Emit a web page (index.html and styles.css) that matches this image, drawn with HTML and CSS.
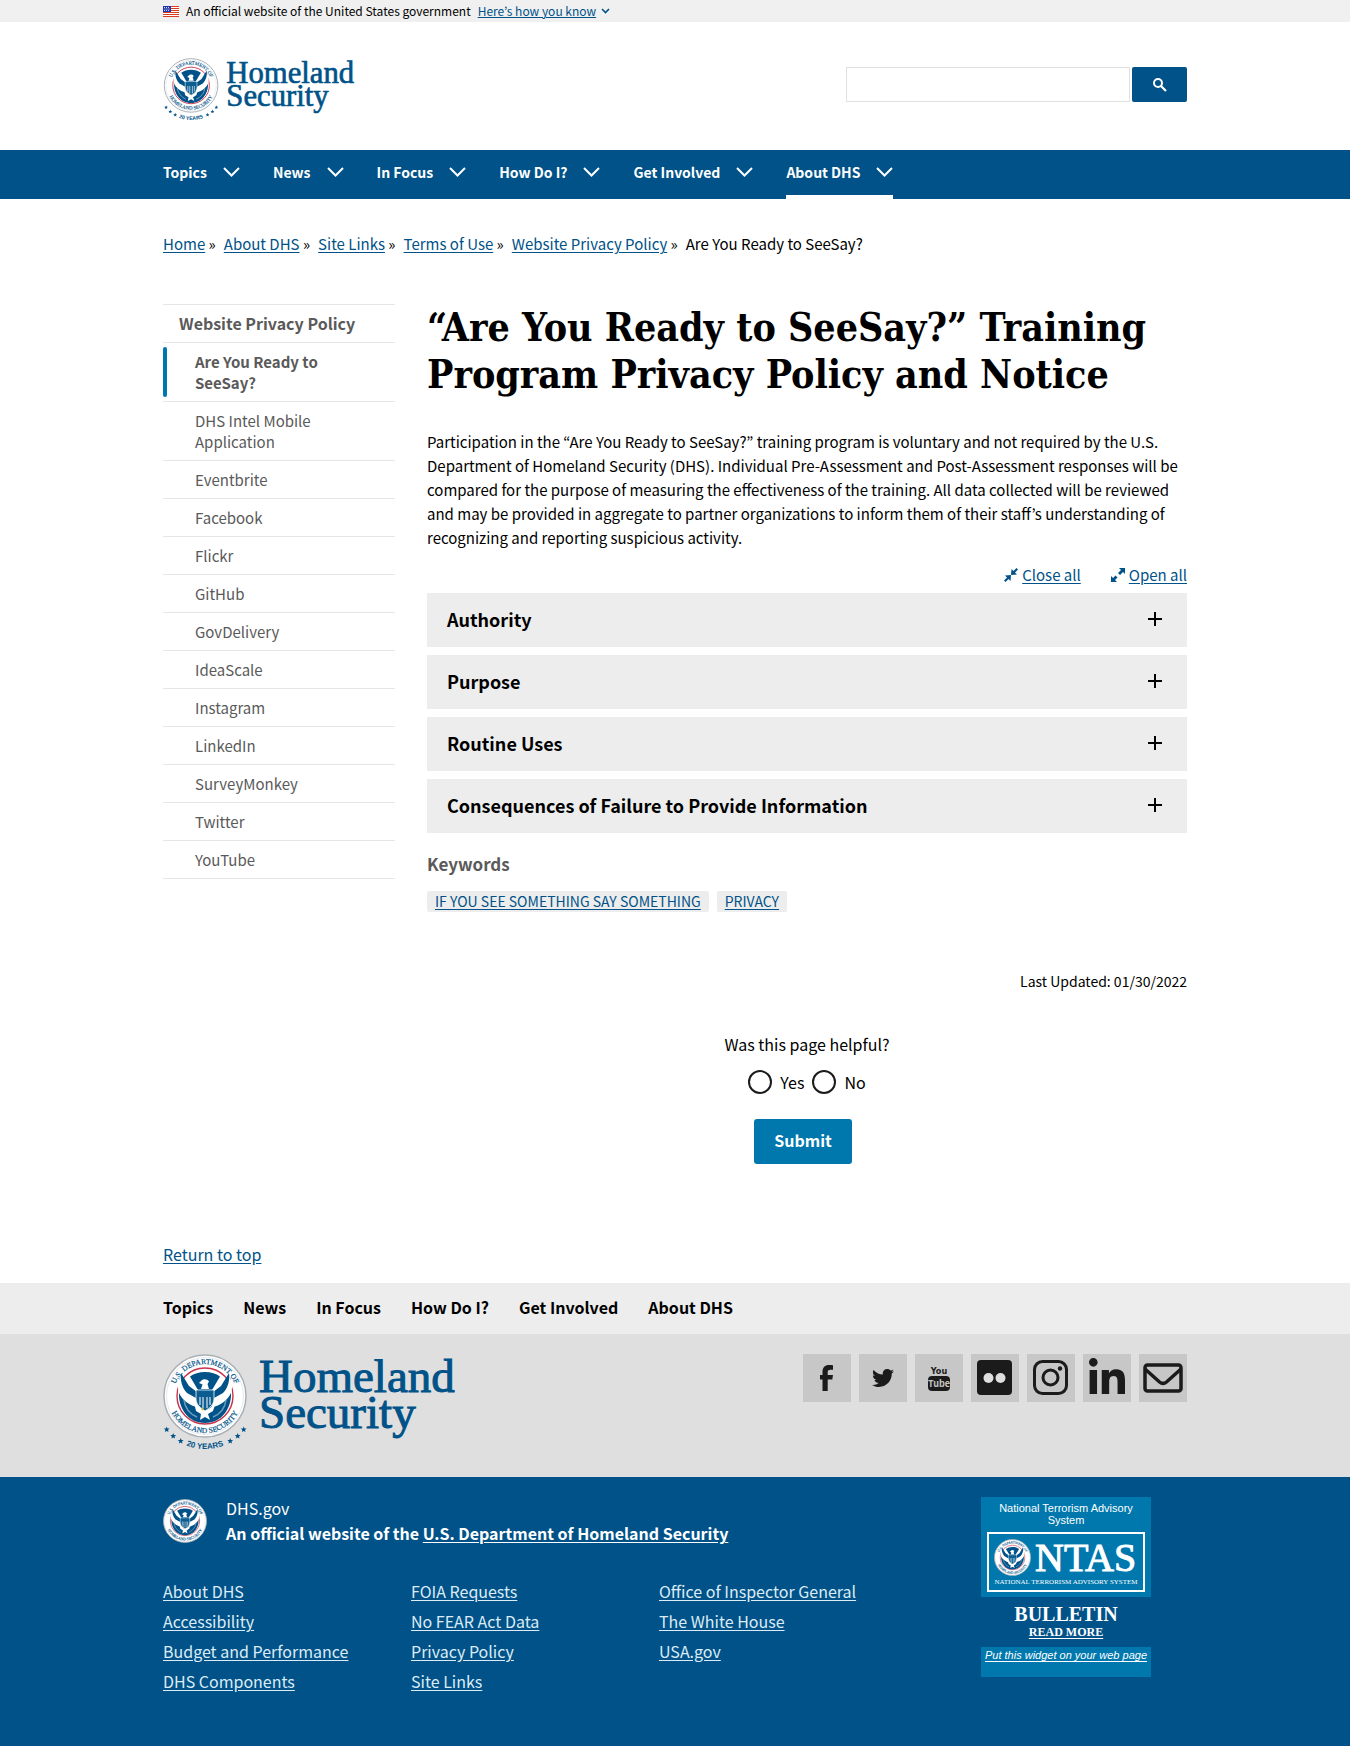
FILE: index.html
```html
<!DOCTYPE html>
<html lang="en">
<head>
<meta charset="utf-8">
<meta name="viewport" content="width=device-width, initial-scale=1">
<title>“Are You Ready to SeeSay?” Training Program Privacy Policy and Notice | Homeland Security</title>
<link rel="stylesheet" href="styles.css">
</head>
<body id="top">
<svg class="sprite" width="0" height="0" aria-hidden="true">
  <defs>
    <path id="ring-top" d="M11 50A32 32 0 1 1 73 50"/>
    <path id="ring-bottom" d="M5 42A37 37 0 0 0 79 42"/>
    <path id="ring-years" d="M-11 42A53 53 0 0 0 95 42"/>
  </defs>
  <symbol id="seal" viewBox="0 0 84 84" overflow="visible">
    <circle cx="42" cy="42" r="41" fill="#fff" stroke="#a9b0b5" stroke-width="1.5"/>
    <circle cx="42" cy="42" r="38.5" fill="none" stroke="#d5d9dc" stroke-width=".6"/>
    <circle cx="42" cy="42" r="28" fill="#fff" stroke="#c8324a" stroke-width="1.4"/>
    <g fill="#005288" font-family="Liberation Serif, serif" font-size="7.5" stroke="#005288" stroke-width=".2">
      <text text-anchor="middle"><textPath href="#ring-top" startOffset="50%">U.S. DEPARTMENT OF</textPath></text>
      <text text-anchor="middle"><textPath href="#ring-bottom" startOffset="50%">HOMELAND SECURITY</textPath></text>
    </g>
    <path fill="#005288" d="M42 18c-6 0-11 1.600-15 4.500L35 36l-3 6-9-4-6-15c-2 8-1 11 2 16l-3-1c-1 16 9 31 26 31s27-15 26-31l-3 1c3-5 4-8 2-16l-6 15-9 4-3-6 8-13.500C53 19.600 48 18 42 18z"/>
    <path fill="#fff" d="M18 22l6 13 10 7 1 11c-8-1-16-7-19-14-2-6-1-12 2-17zM66 22l-6 13-10 7-1 11c8-1 16-7 19-14 2-6 1-12-2-17z"/>
    <path fill="#005288" d="M18 19l8 13 8 6-1 6-9-5c-5-5-7-13-6-20zM66 19l-8 13-8 6 1 6 9-5c5-5 7-13 6-20z"/>
    <path fill="#fff" d="M38 27c2-2.500 6-2.500 8 .5l-1.500 2.500 1.500 5h-8l1.500-4.500L36 29z"/>
    <path fill="#0b5d92" stroke="#fff" stroke-width=".8" d="M33 36h18v9c0 6-5 9-9 12-4-3-9-6-9-12z"/>
    <path stroke="#fff" stroke-width="1" d="M37 43v8M40 43v11M44 43v11M47 43v8"/>
    <path fill="#fff" d="M31 48l7 6 4 3 5-3 6-6-3 9-5 3 2 6-5-3-5 3 1-6-5-3z"/>
    <path fill="none" stroke="#6f9fc0" stroke-width="1.500" d="M21 46c1 8 6 14 13 17M63 46c-1 8-6 14-13 17"/>
    <circle cx="39.500" cy="55" r="1.200" fill="#c9b84a"/>
  </symbol>
  <symbol id="logo" viewBox="0 0 292 98" overflow="visible">
    <use href="#seal" width="84" height="84"/>
    <g fill="#005288">
      <path id="star" d="M3.700 72.500l.8 2 2.100.1-1.600 1.400.5 2.100-1.800-1.200-1.800 1.200.5-2.100-1.600-1.400 2.100-.1z"/>
      <use href="#star" x="6.500" y="6.500"/><use href="#star" x="14" y="11.500"/>
      <use href="#star" x="77" y="0"/><use href="#star" x="71" y="6.500"/><use href="#star" x="63.500" y="11.500"/>
      <text font-family="Liberation Sans, sans-serif" font-size="8" font-weight="bold" text-anchor="middle"><textPath href="#ring-years" startOffset="50%">20 YEARS</textPath></text>
      <g font-family="Liberation Serif, serif" font-size="47" stroke="#005288" stroke-width="1">
        <text x="96" y="38">Homeland</text>
        <text x="96" y="74">Security</text>
      </g>
    </g>
  </symbol>
  <symbol id="chevron" viewBox="0 0 17 10"><path fill="none" stroke="currentColor" stroke-width="2" d="M1 1l7.500 7.500L16 1"/></symbol>
  <symbol id="plus" viewBox="0 0 14 14"><path fill="currentColor" d="M6 0h2v6h6v2H8v6H6V8H0V6h6z"/></symbol>
</svg>

<div class="banner">
  <div class="container banner-row">
    <svg class="flag" viewBox="0 0 16 11" aria-hidden="true">
      <path fill="#fff" d="M0 0h16v11H0z"/>
      <path stroke="#db3e1f" d="M0 .5h16M0 2.500h16M0 4.500h16M0 6.500h16M0 8.500h16M0 10.500h16"/>
      <path fill="#1e33b1" d="M0 0h8v6H0z"/>
      <path stroke="#fff" stroke-width=".8" stroke-dasharray="1 1" d="M1 1.500h6M1.500 3h6M1 4.500h6"/>
    </svg>
    <span>An official website of the United States government</span>
    <button class="banner-button" type="button"><span>Here’s how you know</span>
      <svg width="9" height="6" viewBox="0 0 9 6" aria-hidden="true"><path fill="none" stroke="#005288" stroke-width="1.600" d="M1 1l3.500 3.500L8 1"/></svg></button>
  </div>
</div>

<header class="container header">
  <a class="logo" href="#top" aria-label="Homeland Security"><svg viewBox="0 0 292 98" aria-hidden="true"><use href="#logo"/></svg></a>
  <form class="search" role="search">
    <input type="search" aria-label="Search">
    <button type="submit" aria-label="Search"><svg width="14" height="14" viewBox="0 0 14 14" aria-hidden="true"><circle cx="5" cy="5" r="4" fill="none" stroke="#fff" stroke-width="2"/><path stroke="#fff" stroke-width="2.200" d="M8 8l5 5"/></svg></button>
  </form>
</header>

<nav class="nav" aria-label="Primary">
  <ul class="container nav-list">
    <li><button type="button">Topics <svg aria-hidden="true"><use href="#chevron"/></svg></button></li>
    <li><button type="button">News <svg aria-hidden="true"><use href="#chevron"/></svg></button></li>
    <li><button type="button">In Focus <svg aria-hidden="true"><use href="#chevron"/></svg></button></li>
    <li><button type="button">How Do I? <svg aria-hidden="true"><use href="#chevron"/></svg></button></li>
    <li><button type="button">Get Involved <svg aria-hidden="true"><use href="#chevron"/></svg></button></li>
    <li><button type="button" class="current">About DHS <svg aria-hidden="true"><use href="#chevron"/></svg></button></li>
  </ul>
</nav>

<div class="container">
  <nav aria-label="Breadcrumb">
    <ol class="breadcrumb">
      <li><a href="#">Home</a> »</li>
      <li><a href="#">About DHS</a> »</li>
      <li><a href="#">Site Links</a> »</li>
      <li><a href="#">Terms of Use</a> »</li>
      <li><a href="#">Website Privacy Policy</a> »</li>
      <li>Are You Ready to SeeSay?</li>
    </ol>
  </nav>

  <div class="columns">
    <nav class="sidenav" aria-label="Section">
      <ul>
        <li class="parent"><a href="#">Website Privacy Policy</a></li>
        <li class="active"><a href="#" aria-current="page">Are You Ready to SeeSay?</a></li>
        <li><a href="#">DHS Intel Mobile Application</a></li>
        <li><a href="#">Eventbrite</a></li>
        <li><a href="#">Facebook</a></li>
        <li><a href="#">Flickr</a></li>
        <li><a href="#">GitHub</a></li>
        <li><a href="#">GovDelivery</a></li>
        <li><a href="#">IdeaScale</a></li>
        <li><a href="#">Instagram</a></li>
        <li><a href="#">LinkedIn</a></li>
        <li><a href="#">SurveyMonkey</a></li>
        <li><a href="#">Twitter</a></li>
        <li><a href="#">YouTube</a></li>
      </ul>
    </nav>

    <main class="main">
      <h1>“Are You Ready to SeeSay?” Training Program Privacy Policy and Notice</h1>
      <p class="intro">Participation in the “Are You Ready to SeeSay?” training program is voluntary and not required by the U.S. Department of Homeland Security (DHS). Individual Pre-Assessment and Post-Assessment responses will be compared for the purpose of measuring the effectiveness of the training. All data collected will be reviewed and may be provided in aggregate to partner organizations to inform them of their staff’s understanding of recognizing and reporting suspicious activity.</p>
      <div class="toggles">
        <a href="#"><svg viewBox="0 0 14 14" aria-hidden="true"><path fill="#005288" d="M12.500 0L14 1.500l-3 3 2 2-6 .6L7.500 1l2 2zM1.500 14L0 12.500l3-3-2-2 6-.6L6.500 13l-2-2z"/></svg><span>Close all</span></a>
        <a href="#"><svg viewBox="0 0 14 14" aria-hidden="true"><path fill="#005288" d="M8 0h6v6l-2-2-3 3-2-2 3-3zM0 14V8l2 2 2.500-2.500 2 2L4 12l2 2z"/></svg><span>Open all</span></a>
      </div>
      <div class="accordion">
        <h2><button type="button" aria-expanded="false">Authority <svg aria-hidden="true"><use href="#plus"/></svg></button></h2>
        <h2><button type="button" aria-expanded="false">Purpose <svg aria-hidden="true"><use href="#plus"/></svg></button></h2>
        <h2><button type="button" aria-expanded="false">Routine Uses <svg aria-hidden="true"><use href="#plus"/></svg></button></h2>
        <h2><button type="button" aria-expanded="false">Consequences of Failure to Provide Information <svg aria-hidden="true"><use href="#plus"/></svg></button></h2>
      </div>
      <h3 class="keywords-title">Keywords</h3>
      <ul class="tags">
        <li><a href="#">IF YOU SEE SOMETHING SAY SOMETHING</a></li>
        <li><a href="#">PRIVACY</a></li>
      </ul>
      <p class="updated">Last Updated: 01/30/2022</p>
      <form class="feedback">
        <fieldset>
          <legend>Was this page helpful?</legend>
          <div class="choices">
            <input type="radio" name="helpful" id="yes"><label for="yes">Yes</label>
            <input type="radio" name="helpful" id="no"><label for="no">No</label>
          </div>
        </fieldset>
        <button type="submit">Submit</button>
      </form>
    </main>
  </div>
  <p class="return"><a href="#top">Return to top</a></p>
</div>

<footer>
  <nav class="footer-nav" aria-label="Footer">
    <ul class="container">
      <li><a href="#">Topics</a></li>
      <li><a href="#">News</a></li>
      <li><a href="#">In Focus</a></li>
      <li><a href="#">How Do I?</a></li>
      <li><a href="#">Get Involved</a></li>
      <li><a href="#">About DHS</a></li>
    </ul>
  </nav>
  <div class="footer-brand">
    <div class="container footer-brand-row">
      <a class="footer-logo" href="#top" aria-label="Homeland Security"><svg viewBox="0 0 292 98" aria-hidden="true"><use href="#logo"/></svg></a>
      <ul class="social">
        <li><a href="#" aria-label="Facebook"><svg viewBox="0 0 48 48"><path d="M30 11.200v4.600h-2.600c-2.200 0-2.700 1-2.700 2.400V21H30l-.7 4.600h-4.600V37h-5.200V25.600H17V21h2.500v-3.200c0-4.300 2.500-6.800 6.400-6.800 2 0 3.400.1 4.100.2z"/></svg></a></li>
        <li><a href="#" aria-label="Twitter"><svg viewBox="0 0 48 48"><svg x="13" y="13" width="22" height="22" viewBox="0 0 512 512"><path d="M459.370 151.716c.325 4.548.325 9.097.325 13.645 0 138.720-105.583 298.558-298.558 298.558-59.452 0-114.680-17.219-161.137-47.106 8.447.974 16.568 1.299 25.340 1.299 49.055 0 94.213-16.568 130.274-44.832-46.132-.975-84.792-31.188-98.112-72.772 6.498.974 12.995 1.624 19.818 1.624 9.421 0 18.843-1.300 27.614-3.573-48.081-9.747-84.143-51.980-84.143-102.985v-1.299c13.969 7.797 30.214 12.670 47.431 13.319-28.264-18.843-46.781-51.005-46.781-87.391 0-19.492 5.197-37.360 14.294-52.954 51.655 63.675 129.300 105.258 216.365 109.807-1.624-7.797-2.599-15.918-2.599-24.040 0-57.828 46.782-104.934 104.934-104.934 30.213 0 57.502 12.670 76.670 33.137 23.715-4.548 46.456-13.320 66.599-25.340-7.798 24.366-24.366 44.833-46.132 57.827 21.117-2.273 41.584-8.122 60.426-16.243-14.292 20.791-32.161 39.308-52.628 54.253z"/></svg></svg></a></li>
        <li><a href="#" aria-label="YouTube"><svg viewBox="0 0 48 48"><rect x="13" y="22" width="22" height="15" rx="4"/><g font-family="DejaVu Sans Condensed, DejaVu Sans, sans-serif" font-weight="bold" text-anchor="middle"><text x="24" y="20" font-size="9">You</text><text x="24" y="33" font-size="9" fill="#c7c7c7" font-family="Noto Sans CJK KR, sans-serif">Tube</text></g></svg></a></li>
        <li><a href="#" aria-label="Flickr"><svg viewBox="0 0 48 48"><rect x="6" y="6" width="35" height="35" rx="4"/><circle cx="17.500" cy="24" r="5" fill="#dfdfdf"/><circle cx="29.500" cy="24" r="5" fill="#dfdfdf"/></svg></a></li>
        <li><a href="#" aria-label="Instagram"><svg viewBox="0 0 48 48"><g fill="none" stroke="#1b1b1b" stroke-width="3"><rect x="7.500" y="7.500" width="32" height="32" rx="8"/><circle cx="23.500" cy="23.500" r="7.500"/></g><circle cx="33" cy="14.500" r="2.200"/></svg></a></li>
        <li><a href="#" aria-label="LinkedIn"><svg viewBox="0 0 48 48"><svg x="6" y="4" width="36" height="36" viewBox="0 0 448 448"><path d="M100.280 448H7.400V148.900h92.880zM53.790 108.100C24.090 108.100 0 83.500 0 53.800a53.790 53.790 0 0 1 107.580 0c0 29.700-24.100 54.300-53.790 54.300zM447.900 448h-92.680V302.400c0-34.700-.7-79.200-48.290-79.200-48.290 0-55.690 37.700-55.690 76.700V448h-92.780V148.900h89.080v40.800h1.300c12.400-23.500 42.690-48.300 87.880-48.300 94 0 111.280 61.900 111.280 142.300V448z"/></svg></svg></a></li>
        <li><a href="#" aria-label="Email"><svg viewBox="0 0 48 48"><g fill="none" stroke="#1b1b1b" stroke-width="3.500"><rect x="6" y="11" width="36" height="26" rx="2.500"/><path d="M6 15l14.500 13c2.500 2 4.500 2 7 0L42 15"/></g></svg></a></li>
      </ul>
    </div>
  </div>
  <div class="footer-main">
    <div class="container footer-grid">
      <div>
        <div class="identity">
          <svg viewBox="0 0 84 84" role="img" aria-label="DHS seal"><use href="#seal"/></svg>
          <p>DHS.gov<br><b>An official website of the <a href="#">U.S. Department of Homeland Security</a></b></p>
        </div>
        <ul class="links">
          <li><a href="#">About DHS</a></li><li><a href="#">FOIA Requests</a></li><li><a href="#">Office of Inspector General</a></li>
          <li><a href="#">Accessibility</a></li><li><a href="#">No FEAR Act Data</a></li><li><a href="#">The White House</a></li>
          <li><a href="#">Budget and Performance</a></li><li><a href="#">Privacy Policy</a></li><li><a href="#">USA.gov</a></li>
          <li><a href="#">DHS Components</a></li><li><a href="#">Site Links</a></li>
        </ul>
      </div>
      <aside class="ntas">
        <div class="ntas-top">
          <p>National Terrorism Advisory System</p>
          <svg viewBox="0 0 158 60" role="img" aria-label="NTAS">
            <rect x="1" y="1" width="156" height="58" fill="none" stroke="#fff" stroke-width="2"/>
            <use href="#seal" x="7" y="7" width="37" height="37"/>
            <g fill="#fff" font-family="Liberation Serif, serif"><text x="48" y="39" font-size="40" stroke="#fff" stroke-width="1">NTAS</text><text x="79" y="52" font-size="7" text-anchor="middle">NATIONAL TERRORISM ADVISORY SYSTEM</text></g>
          </svg>
        </div>
        <a class="bulletin" href="#"><span>BULLETIN</span><u>READ MORE</u></a>
        <div class="ntas-bottom"><a href="#">Put this widget on your web page</a></div>
      </aside>
    </div>
  </div>
</footer>
</body>
</html>
```
FILE: styles.css
```css
* { box-sizing: border-box; }

:root {
  --navy: #005288;
  --blue: #0078ae;
  --grey: #ededed;
}

body {
  margin: 0;
  color: #000;
  background: #fff;
  font-family: "Noto Sans CJK KR", "Noto Sans", sans-serif;
  font-size: 15px;
  line-height: 24px;
}

h1, h2, h3, p, ul, ol { margin: 0; padding: 0; }
ul, ol { list-style: none; }
a { color: var(--navy); text-underline-offset: 2px; }
button { font: inherit; border: 0; cursor: pointer; }
.sprite { position: absolute; }

.container {
  width: 100%;
  max-width: 1088px;
  margin: 0 auto;
  padding: 0 32px;
}

.banner { background: #f0f0f0; font-size: 12px; line-height: 22px; }
.banner-row { display: flex; align-items: center; gap: 7px; }
.flag { width: 16px; height: 11px; }
.banner-button {
  display: flex;
  align-items: center;
  gap: 5px;
  padding: 0;
  background: none;
  color: var(--navy);
}
.banner-button span { text-decoration: underline; }

.header {
  display: flex;
  justify-content: space-between;
  align-items: flex-start;
  padding-top: 36px;
  padding-bottom: 28px;
}
.logo svg { display: block; width: 192px; height: 64px; }
.search { display: flex; gap: 2px; padding-top: 9px; }
.search input {
  width: 284px;
  height: 35px;
  border: 1px solid #e0e0e0;
  outline: 0;
  font: inherit;
}
.search button {
  display: grid;
  place-items: center;
  width: 55px;
  height: 35px;
  padding: 0;
  border-radius: 2px;
  background: var(--navy);
}

.nav { background: var(--navy); font-size: 14px; }
.nav-list { display: flex; gap: 33px; }
.nav-list button {
  display: flex;
  align-items: center;
  gap: 16px;
  padding: 10px 0 11px;
  border-bottom: 4px solid transparent;
  background: none;
  color: #fff;
  font-weight: 700;
}
.nav-list button.current { border-color: #fff; }
.nav-list svg { width: 17px; height: 10px; }

.breadcrumb { display: flex; flex-wrap: wrap; gap: 8px; padding: 33px 0 48px; }

.columns { display: grid; grid-template-columns: 232px minmax(0, 1fr); gap: 32px; }

.sidenav { line-height: 21px; }
.sidenav li { border-bottom: 1px solid #e6e6e6; }
.sidenav li:first-child { border-top: 1px solid #e6e6e6; }
.sidenav a {
  display: block;
  padding: 8px 48px 8px 32px;
  color: #5a5a5a;
  text-decoration: none;
}
.sidenav .parent a { padding: 8px 16px; font-size: 16px; font-weight: 700; }
.sidenav .active a { position: relative; font-weight: 700; }
.sidenav .active a::before {
  content: "";
  position: absolute;
  inset: 4px auto 4px 0;
  width: 4px;
  border-radius: 4px;
  background: var(--blue);
}

h1 {
  font-family: "DejaVu Serif Condensed", "DejaVu Serif", serif;
  font-size: 39px;
  line-height: 47px;
}
.intro { margin-top: 32px; }
.toggles { display: flex; justify-content: flex-end; gap: 30px; margin-top: 13px; }
.toggles a { display: flex; align-items: center; gap: 4px; text-decoration: none; }
.toggles span { text-decoration: underline; }
.toggles svg { width: 14px; height: 14px; }

.accordion { display: grid; gap: 8px; margin-top: 6px; }
.accordion h2 { font-size: 18px; line-height: 24px; }
.accordion button {
  display: flex;
  justify-content: space-between;
  align-items: center;
  width: 100%;
  padding: 14px 25px 16px 20px;
  background: var(--grey);
  color: #000;
  text-align: left;
}
.accordion svg { width: 14px; height: 14px; }

.keywords-title { margin-top: 19px; color: #5a5a5a; font-size: 17px; line-height: 24px; }
.tags { display: flex; flex-wrap: wrap; gap: 8px; margin-top: 15px; font-size: 14px; }
.tags a {
  display: block;
  padding: 0 8px;
  border-radius: 2px;
  background: var(--grey);
  line-height: 21px;
}
.updated { margin-top: 57px; font-size: 14px; text-align: right; }

.feedback { margin-top: 39px; font-size: 16px; text-align: center; }
.feedback fieldset { margin: 0; padding: 0; border: 0; }
.feedback legend { width: 100%; padding: 0; }
.choices { display: flex; justify-content: center; align-items: center; gap: 8px; margin-top: 14px; }
.choices input {
  appearance: none;
  width: 24px;
  height: 24px;
  margin: 0;
  border: 2px solid #1b1b1b;
  border-radius: 50%;
}
.feedback button {
  margin: 25px 8px 0 0;
  padding: 9px 20px 12px;
  border-radius: 3px;
  background: var(--blue);
  color: #fff;
  font-weight: 700;
}

.return { padding: 78px 0 17px; font-size: 16px; }

.footer-nav { background: var(--grey); font-size: 16px; font-weight: 700; }
.footer-nav ul { display: flex; gap: 30px; padding-top: 12px; padding-bottom: 15px; }
.footer-nav a { color: #000; text-decoration: none; }

.footer-brand { background: #dfdfdf; padding: 20px 0 25px; }
.footer-brand-row { display: flex; justify-content: space-between; align-items: flex-start; }
.footer-logo svg { display: block; width: 292px; height: 98px; }
.social { display: flex; gap: 8px; }
.social a > svg { display: block; width: 48px; height: 48px; background: #c7c7c7; fill: #1b1b1b; }

.footer-main { background: var(--navy); color: #fff; padding: 19px 0 69px; font-size: 16px; }
.footer-main a { color: #fff; }
.footer-grid { display: grid; grid-template-columns: minmax(0, 1fr) 170px; padding-right: 68px; }
.identity { display: flex; gap: 19px; line-height: 25px; }
.identity svg { width: 44px; height: 50px; }
.links {
  display: grid;
  grid-template-columns: 248px 248px 1fr;
  margin-top: 30px;
  line-height: 30px;
}
.footer-main .links a { color: #dcecf7; }

.ntas { padding-top: 1px; font-family: "Liberation Sans", Arial, sans-serif; font-size: 11px; line-height: 12px; text-align: center; }
.ntas-top { padding: 5px 6px 5px; background: var(--blue); }
.ntas-top p { padding: 0 8px; }
.ntas-top svg { display: block; width: 100%; margin-top: 6px; }
.bulletin {
  display: flex;
  flex-direction: column;
  align-items: center;
  padding: 6px 0 8px;
  font-family: "Liberation Serif", serif;
  font-weight: 700;
  text-decoration: none;
}
.bulletin span { font-size: 20px; line-height: 22px; }
.bulletin u { font-size: 12px; line-height: 14px; }
.ntas-bottom { height: 30px; padding-top: 2px; background: var(--blue); font-style: italic; }
```
